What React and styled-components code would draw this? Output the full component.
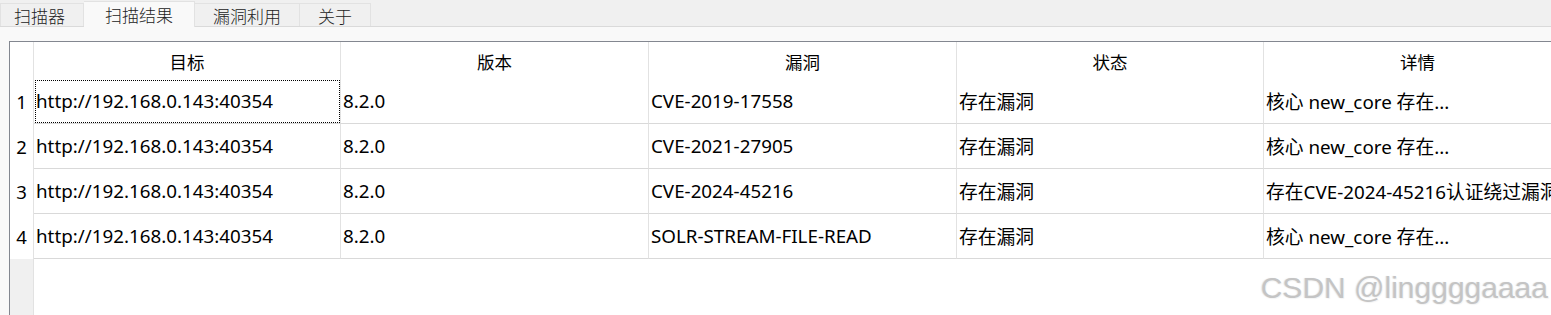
import React from 'react';
import styled, { createGlobalStyle } from 'styled-components';

const GlobalStyle = createGlobalStyle`
  html, body {
    margin: 0;
    padding: 0;
    background: #f9f9f9;
    overflow: hidden;
  }
  body {
    font-family: "Noto Sans", "Noto Sans CJK SC", sans-serif;
    color: #000;
  }
`;

const Window = styled.div`
  position: relative;
  width: 1551px;
  height: 315px;
  overflow: hidden;
  background: #f9f9f9;
`;

const TabBar = styled.div`
  display: flex;
  align-items: flex-end;
  height: 27px;
  background: #f0f0f0;
  border-bottom: 1px solid #dadada;
  box-sizing: border-box;
`;

const Tab = styled.div`
  box-sizing: border-box;
  height: ${({ $active }) => ($active ? '26px' : '23px')};
  margin-bottom: ${({ $active }) => ($active ? '-1px' : '0')};
  padding: ${({ $active }) => ($active ? '0 21px' : '0 18px')};
  display: flex;
  align-items: center;
  font-family: "Noto Sans CJK SC", sans-serif;
  font-size: 17px;
  font-weight: 300;
  color: #222;
  background: ${({ $active }) => ($active ? '#f9f9f9' : '#f0f0f0')};
  border: 1px solid #e2e2e2;
  border-bottom: none;
  &:first-child {
    padding-left: 13px;
  }
  & + & {
    border-left: none;
  }
`;

const Panel = styled.div`
  padding: 14px 0 0 9px;
`;

const Table = styled.div`
  display: grid;
  grid-template-columns: 24px 307px 308px 308px 307px 308px;
  grid-template-rows: 37px repeat(4, 45px) 60px;
  border-top: 1px solid #838790;
  border-left: 1px solid #838790;
  background: #fff;
  width: max-content;
`;

const Corner = styled.div`
  background: #fff;
  border-right: 1px solid #e2e2e2;
`;

const HeaderCell = styled.div`
  display: flex;
  align-items: center;
  justify-content: center;
  font-family: "Noto Sans CJK SC", sans-serif;
  font-size: 17.5px;
  border-right: 1px solid #e2e2e2;
  padding-top: 2px;
`;

const RowNumber = styled.div`
  display: flex;
  align-items: center;
  justify-content: center;
  font-size: 18.5px;
  background: #fff;
  border-right: 1px solid #e2e2e2;
`;

const Cell = styled.div`
  position: relative;
  display: flex;
  align-items: center;
  padding: 0 0 0 2px;
  font-size: 18.8px;
  white-space: nowrap;
  overflow: hidden;
  border-right: 1px solid #e2e2e2;
  border-bottom: 1px solid #d9d9d9;
  box-sizing: border-box;
  outline: ${({ $focused }) => ($focused ? '1px dotted #000' : 'none')};
  outline-offset: -2px;
`;

const EmptyGutter = styled.div`
  background: #f0f0f0;
  border-right: 1px solid #e2e2e2;
`;

const EmptyArea = styled.div`
  grid-column: 2 / span 5;
  background: #fff;
`;

const Watermark = styled.div`
  position: absolute;
  right: 3px;
  bottom: 10px;
  font-family: "Liberation Sans", Arial, sans-serif;
  font-size: 30px;
  color: #c4c4c4;
  text-shadow: 1px 1px 1px #f4f4f4, -1px 0 1px rgba(150, 150, 150, 0.25);
`;

const tabs = ['扫描器', '扫描结果', '漏洞利用', '关于'];
const columns = ['目标', '版本', '漏洞', '状态', '详情'];
const rows = [
  ['http://192.168.0.143:40354', '8.2.0', 'CVE-2019-17558', '存在漏洞', '核心 new_core 存在...'],
  ['http://192.168.0.143:40354', '8.2.0', 'CVE-2021-27905', '存在漏洞', '核心 new_core 存在...'],
  ['http://192.168.0.143:40354', '8.2.0', 'CVE-2024-45216', '存在漏洞', '存在CVE-2024-45216认证绕过漏洞'],
  ['http://192.168.0.143:40354', '8.2.0', 'SOLR-STREAM-FILE-READ', '存在漏洞', '核心 new_core 存在...'],
];

export default function App() {
  return (
    <Window>
      <GlobalStyle />
      <TabBar>
        {tabs.map((t, i) => (
          <Tab key={t} $active={i === 1}>{t}</Tab>
        ))}
      </TabBar>
      <Panel>
        <Table>
          <Corner />
          {columns.map((c) => (
            <HeaderCell key={c}>{c}</HeaderCell>
          ))}
          {rows.map((r, ri) => (
            <React.Fragment key={ri}>
              <RowNumber>{ri + 1}</RowNumber>
              {r.map((v, ci) => (
                <Cell key={ci} $focused={ri === 0 && ci === 0}>{v}</Cell>
              ))}
            </React.Fragment>
          ))}
          <EmptyGutter />
          <EmptyArea />
        </Table>
      </Panel>
      <Watermark>CSDN @linggggaaaa</Watermark>
    </Window>
  );
}
